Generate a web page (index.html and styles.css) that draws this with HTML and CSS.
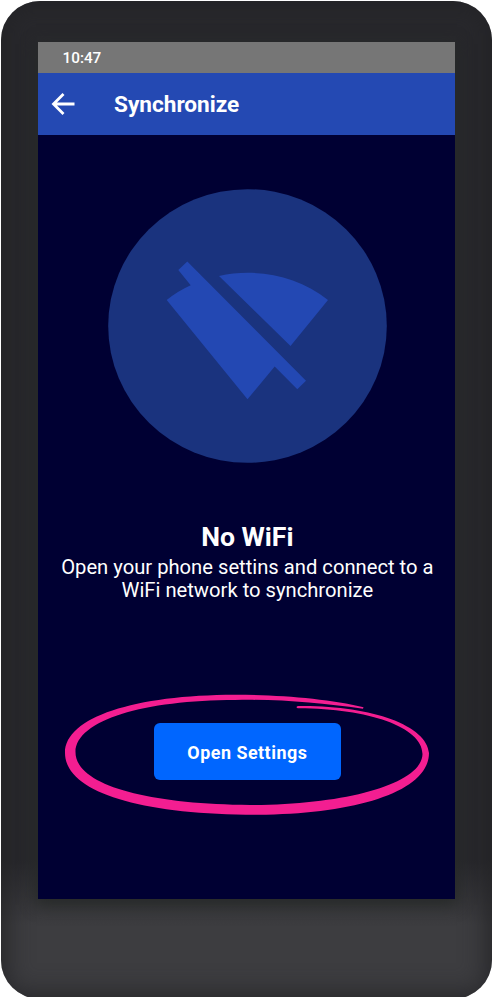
FILE: index.html
```html
<!DOCTYPE html>
<html lang="en">
<head>
<meta charset="utf-8">
<title>Synchronize</title>
<link rel="stylesheet" href="styles.css">
</head>
<body>
<div class="phone">
  <main class="screen">
    <div class="status">10:47</div>
    <header class="appbar">
      <svg class="back" viewBox="0 0 24 24"><path d="M23.500 12H3M12.500 2 2.500 12 12.500 22"/></svg>
      <span class="title">Synchronize</span>
    </header>
    <section class="content">
      <svg class="hero" viewBox="108 189 279 274">
        <ellipse class="disc" cx="247.500" cy="326" rx="139.300" ry="136.800"/>
        <path class="wifi" d="M178.300 270 187.300 261.500 306 380.700 297.300 389.300 274.700 366.500 247.500 399.300 166.700 300Q178 291 190.700 285.300ZM219 276C255 268 297 275 328 300L290.500 346Z"/>
      </svg>
      <h1 class="heading">No WiFi</h1>
      <p class="message">Open your phone settins and connect to a<br>WiFi network to synchronize</p>
      <div class="action">
        <button class="button">Open Settings</button>
        <svg class="ring" viewBox="64 693 366 123"><path d="M363.500 707.300C330 699 280 694.800 235 694.800C135 695 65 717 65 753C65 792 140 814.800 258 814.800C355 814 429 792 429 753C427 725 370 705 298 706C296 706.500 296 708.300 299 708.300C368 708.500 422.500 727 422.500 754C422 784 345 805 250 805C146 804 75.500 785 75.500 752C76 720 145 700 235 700C281 699 320 703 363 708.700Z"/></svg>
      </div>
    </section>
  </main>
</div>
</body>
</html>
```
FILE: styles.css
```css
html {
  overflow: hidden;
}

body {
  height: 997px;
  margin: 0;
  overflow: hidden;
  background: #fff;
  font-family: Roboto, sans-serif;
}

.phone {
  box-sizing: border-box;
  height: 999px;
  margin-left: 1px;
  padding: 42px 37px 0;
  overflow: hidden;
  background: linear-gradient(#28282c 0, #28282c 860px, #3d3d40 925px);
  box-shadow: inset 0 0 28px 3px #222225;
  clip-path: inset(1px 0 0 0 round 39px);
}

.screen {
  width: 416.700px;
  height: 857px;
  background: #000033;
  color: #fff;
  box-shadow: 0 4px 14px 2px #272a29;
}

.status {
  box-sizing: border-box;
  height: 31px;
  padding: 1px 0 0 24.500px;
  background: #767676;
  font-size: 15.300px;
  font-weight: 500;
  line-height: 30px;
}

.appbar {
  display: flex;
  align-items: center;
  height: 61.500px;
  padding-left: 13px;
  background: #2449b3;
}

.back {
  width: 24px;
  height: 24px;
  fill: none;
  stroke: #fff;
  stroke-width: 2.800;
}

.title {
  margin: 2px 0 0 39px;
  font-size: 22.600px;
  font-weight: 700;
}

.content {
  display: flex;
  flex-direction: column;
  align-items: center;
  padding-top: 54.500px;
}

.hero {
  width: 279px;
  height: 274px;
  margin-left: 2px;
}

.disc { fill: #1a337e; }
.wifi { fill: #2348b3; }

.heading {
  margin: 58px 0 0 2px;
  font-size: 26.600px;
  font-weight: 700;
  line-height: 32px;
}

.message {
  margin: 3px 0 0 2px;
  font-size: 20.200px;
  line-height: 23px;
  text-align: center;
  white-space: nowrap;
}

.action {
  position: relative;
  margin: 121px 0 0 2px;
}

.button {
  display: block;
  width: 187px;
  height: 57px;
  padding: 2px 0 0;
  border: 0;
  border-radius: 6px;
  background: #0066ff;
  color: #fff;
  font: 700 17.900px Roboto, sans-serif;
  letter-spacing: 0.500px;
}

.ring {
  position: absolute;
  top: -30px;
  left: -90px;
  width: 366px;
  height: 123px;
  fill: #f31e91;
  pointer-events: none;
}
```
